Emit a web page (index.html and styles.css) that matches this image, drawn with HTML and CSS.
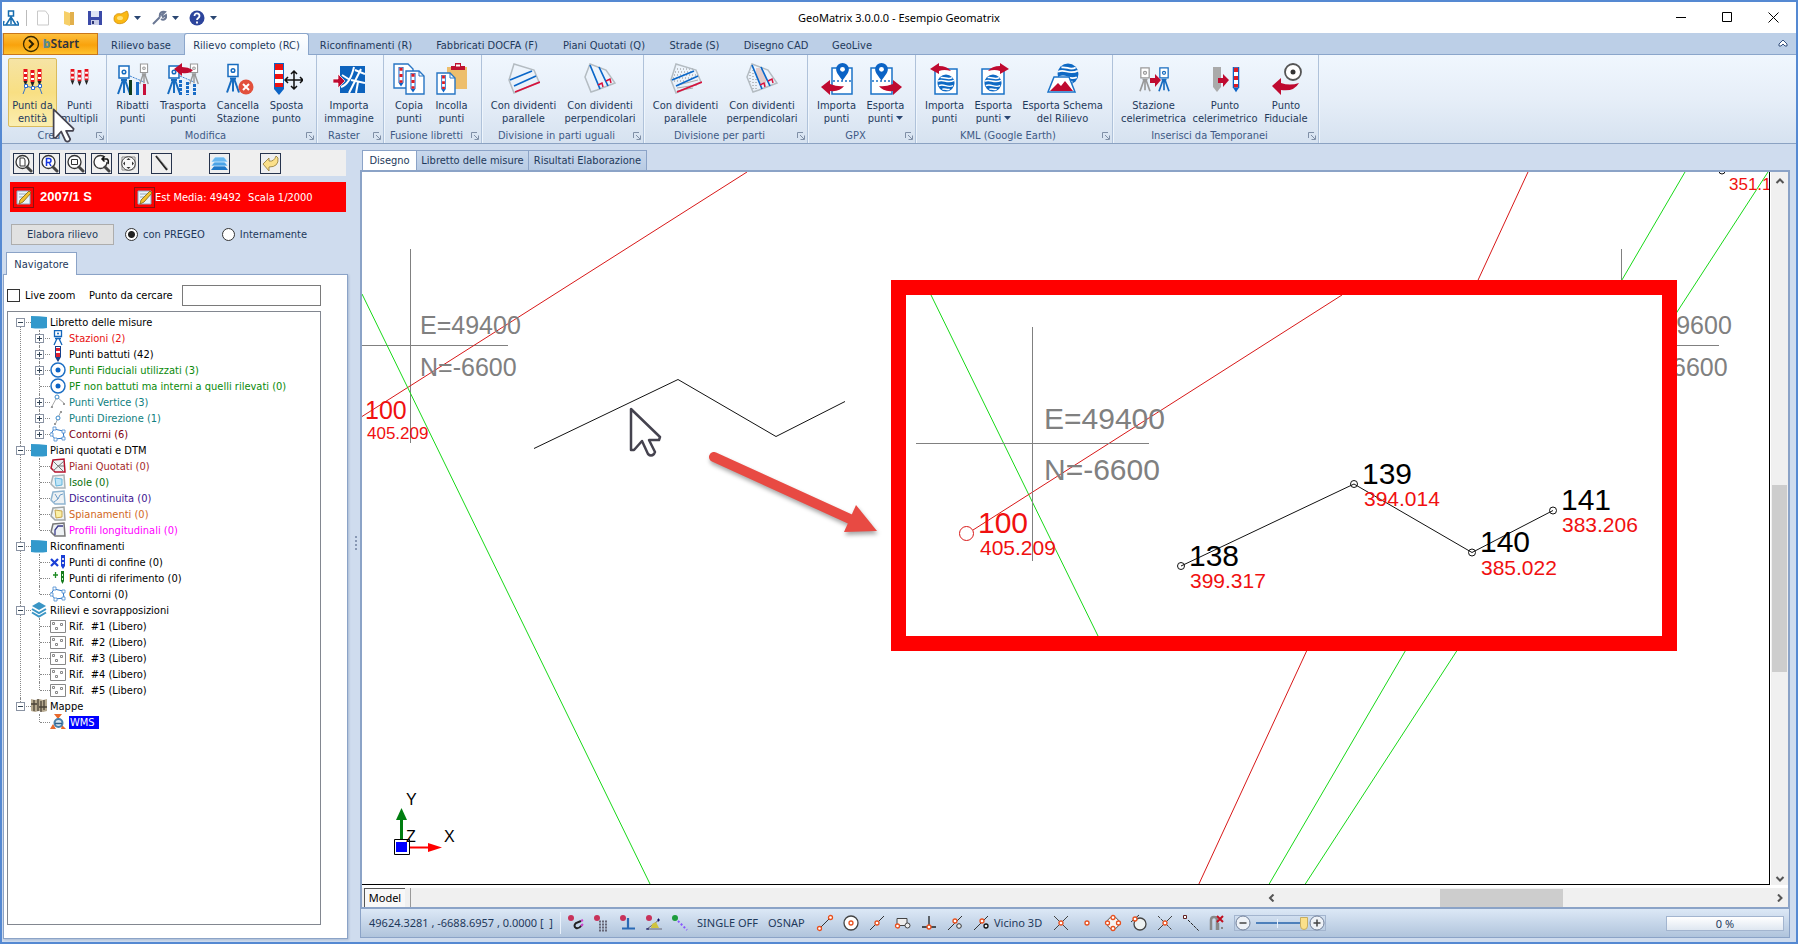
FILE: index.html
```html
<!DOCTYPE html>
<html lang="it">
<head>
<meta charset="utf-8">
<title>GeoMatrix 3.0.0.0 - Esempio Geomatrix</title>
<link rel="stylesheet" href="styles.css">
</head>
<body>
<svg class="defs" aria-hidden="true">
  <symbol id="pole" viewBox="0 0 8 32"><path d="M0 0h8v25l-4 6-4-6z" fill="#0b63c5"/><path d="M1.500 1h5v24h-5z" fill="#fff"/><path d="M1.500 1h5v5h-5zM1.500 11h5v5h-5zM1.500 21h5v4h-5z" fill="#e01b24"/></symbol>
  <symbol id="station" viewBox="0 0 14 30"><path d="M2 1h10v12H2z" fill="#fff" stroke="currentColor" stroke-width="1.500"/><circle cx="7" cy="7" r="1.800" fill="none" stroke="currentColor" stroke-width="1.500"/><path d="M4 15h6M6 15L1 29M8 15l5 14M7 15v13" fill="none" stroke="currentColor" stroke-width="2"/></symbol>
  <symbol id="minipole" viewBox="0 0 5 18"><path d="M.5 0h4v12h-4z" fill="#e8101c"/><path d="M1 3h3v2H1zM1 8h3v2H1z" fill="#fff"/><path d="M.5 12h4l-2 5z" fill="#222"/></symbol>
  <symbol id="divpar" viewBox="0 0 32 32"><path d="M6 1l20 6 5 12-25 11L1 17z" fill="none" stroke="#b4bcc2" stroke-width="1.500"/><path d="M2 17L24 8M6 23l22-10" stroke="#0a67c9" stroke-width="1.700"/><path d="M7 29l25-10" stroke="#d8123c" stroke-width="1.700"/></symbol>
  <symbol id="divperp" viewBox="0 0 32 32"><path d="M6 1l16 6 9 13-18 7-6 2L1 14z" fill="none" stroke="#b4bcc2" stroke-width="1.500"/><path d="M6 2l10 24M15 4l9 19" stroke="#0a67c9" stroke-width="1.700"/><path d="M14 22l4-2 1 4M22 18l4-2 1 4" fill="none" stroke="#d8123c" stroke-width="1.500"/></symbol>
  <symbol id="globe" viewBox="0 0 20 20"><circle cx="10" cy="10" r="9.500" fill="#0e69c4"/><path d="M1 8c6-3 10 3 18-1M2 13c6-3 9 3 16 0M4 4c5-1 8 3 13 0M6 17c3-1 5 1 8 0" fill="none" stroke="#fff" stroke-width="1.600"/></symbol>
  <symbol id="pin" viewBox="0 0 12 17"><path d="M6 0a6 6 0 0 1 6 6c0 4-4 7-6 11C4 13 0 10 0 6a6 6 0 0 1 6-6z" fill="#0b63c5"/><circle cx="6" cy="6" r="2.300" fill="#fff"/></symbol>
  <symbol id="launch" viewBox="0 0 8 8"><path d="M.5 6V.5H6M3 3l4 4M7.500 3.500v4h-4" fill="none" stroke="#7f8fa6"/></symbol>
  <symbol id="caret" viewBox="0 0 7 4"><path d="M0 0h7L3.500 4z" fill="#2a4672"/></symbol>
  <symbol id="folder" viewBox="0 0 16 16"><path d="M0 2q8 0 16 1v11q-8 1-16 0z" fill="#3399cc"/></symbol>
  <symbol id="target" viewBox="0 0 16 16"><circle cx="8" cy="8" r="7" fill="#fff" stroke="#1d6fc4" stroke-width="1.500"/><circle cx="8" cy="8" r="2.500" fill="#0b63c5"/></symbol>
  <symbol id="polygon" viewBox="0 0 16 16"><path d="M4 3l9 2 1 7-9 1-4-5z" fill="none" stroke="#2c76c8"/><path d="M3 1h3v3H3zM12 4h3v3h-3zM12 11h3v3h-3zM4 12h3v3H4zM0 7h3v3H0z" fill="#fff" stroke="#4a8bd0" stroke-width=".8"/></symbol>
  <symbol id="slot" viewBox="0 0 16 16"><path d="M.5 2.500h15v12H.5z" fill="#fff" stroke="#888"/><path d="M2.500 4.500h2v2h-2zM10.500 5.500h2v2h-2zM5.500 9.500h2v2h-2z" fill="none" stroke="#888"/></symbol>
  <symbol id="mesh" viewBox="0 0 16 16"><path d="M3 2l11-1 1 13H5L1 10z" fill="#eef2f4" stroke="currentColor" stroke-width="1.500"/></symbol>
  <symbol id="lens" viewBox="0 0 19 19"><circle cx="8.500" cy="8" r="6.500" fill="#fdfdfd" stroke="#333" stroke-width="1.300"/><path d="M13 13l4 4" stroke="#444" stroke-width="3" stroke-linecap="round"/></symbol>
  <symbol id="edit" viewBox="0 0 19 19"><path d="M3 3h13v13H3z" fill="#eaf3fa" stroke="#87a9c2"/><path d="M5 6h8M5 9h5" stroke="#9ab"/><path d="M15 3l2 2-8 9-4 2 1-4z" fill="#f2c230" stroke="#7b6214" stroke-width=".8"/></symbol>
  <symbol id="cursor" viewBox="-2 -2 34 52"><path d="M0 0v41h3l8-9 6 13q3 3 6 0l1-2-6-12h10l1-3z" fill="#fff" stroke="#45434f" stroke-width="2.500" stroke-linejoin="round"/></symbol>
</svg>

<div class="window">
  <header class="titlebar">
    <div class="quick">
      <svg class="q16" viewBox="0 0 16 16"><path d="M5.500 1h5v5h-5z" fill="#fff" stroke="#176cae" stroke-width="1.500"/><path d="M8 6v8M8 7l-5 8M8 7l5 8M1 11L0 15h16l-2-4" fill="none" stroke="#176cae" stroke-width="1.500"/></svg>
      <span class="q-sep"></span>
      <button class="q" aria-label="Nuovo"><svg viewBox="0 0 16 16"><path d="M2.500 1h8l3 4v10h-11z" fill="#fff" stroke="#c9c9c9"/></svg></button>
      <button class="q" aria-label="Apri"><svg viewBox="0 0 16 16"><path d="M3 1l6 2v13l-6-2z" fill="#f6cf68"/><path d="M9 2h4v13H9z" fill="#e2b04c"/></svg></button>
      <button class="q" aria-label="Salva"><svg viewBox="0 0 16 16"><path d="M1 1h14v14H1z" fill="#3b4aa8"/><path d="M4 1h8v6H4z" fill="#dfe4f5"/><path d="M4 10h8v5H4z" fill="#c6cbe6"/><path d="M5 11h2v3H5z" fill="#2b3475"/></svg></button>
      <button class="q q-drop" aria-label="Vista"><svg viewBox="0 0 16 16"><path d="M1 9c0-5 4-6 7-5l6-3c2 3 2 8-2 11s-11 2-11-3z" fill="#fbb914" stroke="#d18b05" stroke-width=".8"/><ellipse cx="7" cy="8" rx="3" ry="2" fill="#ffe27a"/></svg><svg class="caret"><use href="#caret"/></svg></button>
      <button class="q q-drop" aria-label="Strumenti"><svg viewBox="0 0 16 16"><path d="M2 14l7-7M9 7c-1-4 2-6 5-5l-3 3 1 2 3-2c1 3-2 6-5 4" fill="none" stroke="#6b7894" stroke-width="2"/></svg><svg class="caret"><use href="#caret"/></svg></button>
      <button class="q q-drop" aria-label="Aiuto"><svg viewBox="0 0 16 16"><circle cx="8" cy="8" r="7.500" fill="#2c449c"/><path d="M5.500 6c0-4 5-3 5 0 0 2-2.500 2-2.500 4M8 11.500v2" fill="none" stroke="#fff" stroke-width="1.800"/></svg><svg class="caret"><use href="#caret"/></svg></button>
    </div>
    <h1 class="title">GeoMatrix 3.0.0.0 - Esempio Geomatrix</h1>
    <div class="controls">
      <button aria-label="Riduci"><svg viewBox="0 0 11 11"><path d="M0 5.500h10"/></svg></button>
      <button aria-label="Ingrandisci"><svg viewBox="0 0 11 11"><path d="M.5.5h9v9h-9z"/></svg></button>
      <button aria-label="Chiudi"><svg viewBox="0 0 11 11"><path d="M.5.5l10 10M10.500.5l-10 10"/></svg></button>
    </div>
  </header>

  <nav class="tabs">
    <button class="start"><svg viewBox="0 0 18 18"><circle cx="9" cy="9" r="7.500" fill="none" stroke="#3b2b00" stroke-width="1.300"/><path d="M7 5l4 4-4 4" fill="none" stroke="#2b2000" stroke-width="2"/></svg><span><b>b</b>Start</span></button>
    <button class="w86">Rilievo base</button>
    <button class="w125 active">Rilievo completo (RC)</button>
    <button class="w114">Riconfinamenti (R)</button>
    <button class="w128">Fabbricati DOCFA (F)</button>
    <button class="w106">Piani Quotati (Q)</button>
    <button class="w75">Strade (S)</button>
    <button class="w88">Disegno CAD</button>
    <button class="w64">GeoLive</button>
    <button class="collapse" aria-label="Comprimi"><svg viewBox="0 0 10 8"><path d="M1 5l4-4 4 4v2H7L5 5 3 7H1z" fill="#fff" stroke="#35507d"/></svg></button>
  </nav>

  <div class="ribbon">
    <section class="group g103">
      <div class="tools">
        <button class="tool w49 hot"><svg viewBox="0 0 32 32"><use href="#minipole" x="6" y="6" width="5" height="18"/><use href="#minipole" x="13" y="7" width="5" height="18"/><use href="#minipole" x="20" y="6" width="5" height="18"/><path d="M6 31l3-8 7 2 6-2 3 8" fill="none" stroke="#3772c8"/><path d="M7.500 21.500h3v3h-3zM14.500 23.500h3v3h-3zM21.500 21.500h3v3h-3z" fill="#fff" stroke="#2c6bd0"/></svg>Punti da<br>entità</button>
        <button class="tool w45"><svg viewBox="0 0 32 32"><use href="#minipole" x="6" y="6" width="5" height="17"/><use href="#minipole" x="13" y="7" width="5" height="17"/><use href="#minipole" x="20" y="6" width="5" height="17"/></svg>Punti<br>multipli</button>
      </div>
      <footer>Crea<svg><use href="#launch"/></svg></footer>
      <svg class="pointer" aria-hidden="true"><use href="#cursor"/></svg>
    </section>
    <section class="group g210">
      <div class="tools">
        <button class="tool w43"><svg viewBox="0 0 32 32"><path d="M13 13l14 6" stroke="#3a80d0" stroke-dasharray="2 1"/><use href="#station" x="22" y="0" width="10" height="22" color="#999"/><use href="#station" x="0" y="2" width="14" height="30" color="#176cc0"/><path d="M12 17h3v15h-3z" fill="#123d1c"/><path d="M19 19h3v13h-3z" fill="#1a6cc6"/><path d="M26 21h3v11h-3z" fill="#c8103a"/></svg>Ribatti<br>punti</button>
        <button class="tool w58"><svg viewBox="0 0 32 32"><path d="M13 13l14 6" stroke="#3a80d0" stroke-dasharray="2 1"/><use href="#station" x="22" y="0" width="10" height="22" color="#999"/><use href="#station" x="0" y="2" width="14" height="30" color="#176cc0"/><path d="M13.500 17v15M20.500 19v13M27.500 21v11" stroke="#1a6cc6" stroke-width="3" stroke-dasharray="3 1"/><path d="M7 6l8-6v4q6 0 11 3-3 4-11 3v3z" fill="#bf0a30"/></svg>Trasporta<br>punti</button>
        <button class="tool w52"><svg viewBox="0 0 32 32"><use href="#station" x="4" y="0" width="14" height="31" color="#176cc0"/><circle cx="24" cy="24" r="7.500" fill="#e2503c"/><path d="M21 21l6 6M27 21l-6 6" stroke="#fff" stroke-width="2"/></svg>Cancella<br>Stazione</button>
        <button class="tool w45"><svg viewBox="0 0 32 32"><path d="M3 0h10v26l-5 6-5-6z" fill="#0b63c5"/><path d="M4 1h8v22H4z" fill="#fff"/><path d="M4 1h8v6H4zM4 11h8v5H4zM4 20h8v4H4z" fill="#ee1111"/><path d="M23 9v16M15 17h16M20 11l3-3 3 3M20 23l3 3 3-3M17 14l-3 3 3 3M29 14l3 3-3 3" fill="none" stroke="#111" stroke-width="1.500"/></svg>Sposta<br>punto</button>
      </div>
      <footer>Modifica<svg><use href="#launch"/></svg></footer>
    </section>
    <section class="group g67">
      <div class="tools">
        <button class="tool w56"><svg viewBox="0 0 32 32"><path d="M7 3h25v27H7z" fill="#0d63bd"/><path d="M8 24q9-3 13-20M18 17l14 3M22 7l10 4M16 30q4-8 12-24M9 12l8 5M25 19l-2 11" fill="none" stroke="#fff" stroke-width="2"/><path d="M0 16h5v-5l7 7-7 7v-5H0z" fill="#bf0a30" stroke="#fff" stroke-width=".7"/></svg>Importa<br>immagine</button>
      </div>
      <footer>Raster<svg><use href="#launch"/></svg></footer>
    </section>
    <section class="group g98">
      <div class="tools">
        <button class="tool w42"><svg viewBox="0 0 32 32"><path d="M1 1h14l5 5v19H1z" fill="#fff" stroke="#2775c4" stroke-width="1.400"/><use href="#pole" x="5" y="4" width="6" height="20"/><path d="M13 8h13l5 5v18H13z" fill="#fff" stroke="#2775c4" stroke-width="1.400"/><path d="M26 8v5h5" fill="none" stroke="#2775c4"/><use href="#pole" x="17" y="10" width="6" height="20"/></svg>Copia<br>punti</button>
        <button class="tool w43"><svg viewBox="0 0 32 32"><path d="M11 4h20v22H11z" fill="#edbe6c"/><path d="M15 3h4V0h6v3h4v4H15z" fill="#bf1230"/><path d="M20 1.500h4v2h-4z" fill="#fff"/><path d="M1 10h13l5 5v16H1z" fill="#fff" stroke="#2775c4" stroke-width="1.400"/><path d="M14 10v5h5" fill="none" stroke="#2775c4"/><use href="#pole" x="5" y="12" width="5" height="18"/></svg>Incolla<br>punti</button>
      </div>
      <footer>Fusione libretti<svg><use href="#launch"/></svg></footer>
    </section>
    <section class="group g162">
      <div class="tools">
        <button class="tool w75"><svg><use href="#divpar"/></svg>Con dividenti<br>parallele</button>
        <button class="tool w78"><svg><use href="#divperp"/></svg>Con dividenti<br>perpendicolari</button>
      </div>
      <footer>Divisione in parti uguali<svg><use href="#launch"/></svg></footer>
    </section>
    <section class="group g164">
      <div class="tools">
        <button class="tool w75"><svg viewBox="0 0 32 32"><path d="M7 6h16M5 9h18M4 12h24M3 15h20M4 18h12" stroke="#888" stroke-dasharray="1 2"/><path d="M7 25l20-3M7 28l16-3M8 22l20-5" stroke="#aaa"/><use href="#divpar"/></svg>Con dividenti<br>parallele</button>
        <button class="tool w78"><svg viewBox="0 0 32 32"><path d="M4 9v12M7 7v19M10 16v10" stroke="#888" stroke-dasharray="1 2"/><path d="M11 5v10M13 5v14M15 6v14M17 9v12M19 13v10" stroke="#d9a69c"/><use href="#divperp"/></svg>Con dividenti<br>perpendicolari</button>
      </div>
      <footer>Divisione per parti<svg><use href="#launch"/></svg></footer>
    </section>
    <section class="group g108">
      <div class="tools">
        <button class="tool w49"><svg viewBox="0 0 32 32"><path d="M16 5h-5v26h20V5h-5" fill="#fff" stroke="#1b73c8" stroke-width="1.500"/><path d="M12 18h19" stroke="#1b73c8" stroke-width="1.500" stroke-dasharray="2 2"/><use href="#pin" x="15" y="0" width="13" height="18"/><path d="M0 24l9-7v4q8 3 14 2-4 6-14 5v4z" fill="#bf0a30"/></svg>Importa<br>punti</button>
        <button class="tool w49"><svg viewBox="0 0 32 32"><path d="M6 5H1v26h21V5h-5" fill="#fff" stroke="#1b73c8" stroke-width="1.500"/><path d="M2 18h19" stroke="#1b73c8" stroke-width="1.500" stroke-dasharray="2 2"/><use href="#pin" x="5" y="0" width="13" height="18"/><path d="M32 24l-9-7v4q-8 3-14 2 4 6 14 5v4z" fill="#bf0a30"/></svg>Esporta<br>punti <svg class="caret"><use href="#caret"/></svg></button>
      </div>
      <footer>GPX<svg><use href="#launch"/></svg></footer>
    </section>
    <section class="group g197">
      <div class="tools">
        <button class="tool w49"><svg viewBox="0 0 32 32"><path d="M6 6v25h22V6z" fill="#fff" stroke="#1b73c8" stroke-width="1.500"/><use href="#globe" x="8" y="11" width="18" height="18"/><path d="M1 6l9-6v3q8 0 12 5-7-2-12 0v3z" fill="#bf0a30"/></svg>Importa<br>punti</button>
        <button class="tool w49"><svg viewBox="0 0 32 32"><path d="M4 6v25h22V6z" fill="#fff" stroke="#1b73c8" stroke-width="1.500"/><use href="#globe" x="6" y="11" width="18" height="18"/><path d="M31 6l-9-6v3q-8 0-12 5 7-2 12 0v3z" fill="#bf0a30"/></svg>Esporta<br>punti <svg class="caret"><use href="#caret"/></svg></button>
        <button class="tool w89"><svg viewBox="0 0 32 32"><use href="#globe" x="10" y="0" width="22" height="22"/><path d="M7 14h15l6 15H1z" fill="#fff" stroke="#1b73c8" stroke-width="1.500"/><path d="M3 28l8-8 3 3 4-5 8 10z" fill="#bf0a30"/></svg>Esporta Schema<br>del Rilievo</button>
      </div>
      <footer>KML (Google Earth)<svg><use href="#launch"/></svg></footer>
    </section>
    <section class="group g206">
      <div class="tools">
        <button class="tool w73"><svg viewBox="0 0 32 32"><use href="#station" x="1" y="4" width="12" height="25" color="#999"/><use href="#station" x="20" y="4" width="12" height="25" color="#176cc0"/><path d="M12 15h5v-4l6 6-6 7v-4h-5z" fill="#bf0a30"/></svg>Stazione<br>celerimetrica</button>
        <button class="tool w70"><svg viewBox="0 0 32 32"><path d="M4 4h8v20l-4 5-4-5z" fill="#aaa"/><use href="#pole" x="23" y="4" width="8" height="26"/><path d="M9 15h5v-4l6 6-6 7v-4H9z" fill="#bf0a30"/></svg>Punto<br>celerimetrico</button>
        <button class="tool w52"><svg viewBox="0 0 32 32"><circle cx="23" cy="9" r="8" fill="#fff" stroke="#555" stroke-width="1.800"/><circle cx="23" cy="9" r="2.500" fill="#333"/><path d="M2 23l9-8v5q9 3 18 0-5 9-18 7v5z" fill="#bf0a30"/></svg>Punto<br>Fiduciale</button>
      </div>
      <footer>Inserisci da Temporanei<svg><use href="#launch"/></svg></footer>
    </section>
  </div>

  <main class="workspace">
    <aside class="side">
      <div class="viewbar">
        <button aria-label="Zoom foglio"><svg viewBox="0 0 19 19"><use href="#lens"/><path d="M6 4h4l1 2v6H6z" fill="#fff" stroke="#333"/></svg></button>
        <button aria-label="Zoom rilievo"><svg viewBox="0 0 19 19"><use href="#lens"/><path d="M6.500 12V4.500H9q2 0 2 2t-2 2H6.500M9 8.500l2 3.500" fill="none" stroke="#1636e0" stroke-width="1.500"/></svg></button>
        <button aria-label="Zoom finestra"><svg viewBox="0 0 19 19"><use href="#lens"/><path d="M5.500 5.500h6v5h-6z" fill="none" stroke="#333"/></svg></button>
        <button aria-label="Zoom precedente"><svg viewBox="0 0 19 19"><use href="#lens"/><path d="M10 3h7v5h-7z" fill="#f0f0f0"/><path d="M10 5h5q2 1 1 5M12.500 2.500L10 5l2.500 2.500" fill="none" stroke="#111" stroke-width="1.500"/></svg></button>
        <button class="gap-s" aria-label="Sposta vista"><svg viewBox="0 0 19 19"><path d="M3 3h13v10q-1 3-4 3H3z" fill="#fafafa" stroke="#888"/><circle cx="9.500" cy="9.500" r="6.800" fill="#f8f8f8" stroke="#444"/><path d="M9.500 4l2 2h-4zM9.500 15l2-2h-4zM4 9.500l2-2v4zM15 9.500l-2-2v4z" fill="#333"/></svg></button>
        <button class="gap-m" aria-label="Penna"><svg viewBox="0 0 19 19"><path d="M4 2l11 14" stroke="#222" stroke-width="2"/><path d="M5 2l11 13" stroke="#999" stroke-width=".8"/></svg></button>
        <button class="gap-l" aria-label="Livelli"><svg viewBox="0 0 19 19"><path d="M5 11h9l4 5H1z" fill="#1e78c8"/><path d="M5 7h9l4 5H1z" fill="#4ba3e6" stroke="#e8f5ff" stroke-width=".7"/><path d="M5 3h9l4 5H1z" fill="#68b7f0" stroke="#e8f5ff" stroke-width=".7"/></svg></button>
        <button class="gap-x" aria-label="Annulla"><svg viewBox="0 0 19 19"><path d="M2 10l6-6v3q5 1 7-5l2 2q1 9-9 9v4z" fill="#fbe08a" stroke="#8f7733" stroke-width=".8"/></svg></button>
      </div>
      <div class="survey">
        <button aria-label="Modifica rilievo"><svg><use href="#edit"/></svg></button>
        <strong>2007/1 S</strong>
        <button class="second" aria-label="Modifica est media"><svg><use href="#edit"/></svg></button>
        <span>Est Media: 49492</span>
        <span class="scale">Scala 1/2000</span>
      </div>
      <div class="process">
        <button class="run">Elabora rilievo</button>
        <label class="r1"><input type="radio" name="mode" checked>con PREGEO</label>
        <label class="r2"><input type="radio" name="mode">Internamente</label>
      </div>
      <div class="nav-tab"><button>Navigatore</button></div>
      <div class="navigator">
        <div class="search">
          <label class="live"><input type="checkbox">Live zoom</label>
          <label for="punto">Punto da cercare</label>
          <input type="text" id="punto">
        </div>
        <ul class="tree">
          <li><div class="row"><button class="tg minus" aria-label="Comprimi"></button><svg><use href="#folder"/></svg>Libretto delle misure</div>
            <ul>
              <li><div class="row red"><button class="tg" aria-label="Espandi"></button><svg viewBox="0 0 16 16"><path d="M4.500.5h7v6h-7z" fill="#fff" stroke="#1366bb" stroke-width="1.300"/><circle cx="8" cy="3.500" r="1" fill="#1366bb"/><path d="M5 8.500h6M7 8.500L4 15M9 8.500l3 6.500" stroke="#1366bb" stroke-width="1.300"/></svg>Stazioni (2)</div></li>
              <li><div class="row"><button class="tg" aria-label="Espandi"></button><svg viewBox="0 0 16 16"><path d="M5 0h6v11l-3 5-3-5z" fill="#17408b"/><path d="M6 1h4v10H6z" fill="#fff"/><path d="M6 2h4v3H6zM6 7h4v4H6z" fill="#e02030"/></svg>Punti battuti (42)</div></li>
              <li><div class="row green"><button class="tg" aria-label="Espandi"></button><svg><use href="#target"/></svg>Punti Fiduciali utilizzati (3)</div></li>
              <li><div class="row green"><i></i><svg><use href="#target"/></svg>PF non battuti ma interni a quelli rilevati (0)</div></li>
              <li><div class="row teal"><button class="tg" aria-label="Espandi"></button><svg viewBox="0 0 16 16"><path d="M1 14L7 3l8 7" fill="none" stroke="#aaa"/><circle cx="7" cy="3" r="2" fill="#fff" stroke="#3a88c8"/><path d="M1 12h2v2H1zM13 9h2v2h-2z" fill="#999"/></svg>Punti Vertice (3)</div></li>
              <li><div class="row teal"><button class="tg" aria-label="Espandi"></button><svg viewBox="0 0 16 16"><path d="M5 15l6-14" stroke="#aaa"/><circle cx="8" cy="8" r="2" fill="#fff" stroke="#3a88c8"/><path d="M10 1h2v2h-2zM4 13h2v2H4z" fill="#999"/></svg>Punti Direzione (1)</div></li>
              <li><div class="row maroon"><button class="tg" aria-label="Espandi"></button><svg><use href="#polygon"/></svg>Contorni (6)</div></li>
            </ul></li>
          <li><div class="row"><button class="tg minus" aria-label="Comprimi"></button><svg><use href="#folder"/></svg>Piani quotati e DTM</div>
            <ul>
              <li><div class="row brown"><i></i><svg viewBox="0 0 16 16"><use href="#mesh" color="#b5132c"/><path d="M3 13L14 3M3 3l10 10M8 8h6" stroke="#777"/></svg>Piani Quotati (0)</div></li>
              <li><div class="row dgreen"><i></i><svg viewBox="0 0 16 16"><use href="#mesh" color="#aab4b8"/><path d="M5 4l7 1v6l-6 1z" fill="#bfe5f7" stroke="#63b5dc"/></svg>Isole (0)</div></li>
              <li><div class="row indigo"><i></i><svg viewBox="0 0 16 16"><use href="#mesh" color="#8fb4d0"/><path d="M4 12l4-3 2-4 3-1M5 4l3 5" fill="none" stroke="#6d9cc8"/></svg>Discontinuita (0)</div></li>
              <li><div class="row orange"><i></i><svg viewBox="0 0 16 16"><use href="#mesh" color="#a0a5a5"/><path d="M5 4l7 1v6l-6 1z" fill="#fbf0a5" stroke="#c9a74c"/></svg>Spianamenti (0)</div></li>
              <li><div class="row magenta"><i></i><svg viewBox="0 0 16 16"><use href="#mesh" color="#777"/><path d="M5 13V8l3-4h5" fill="none" stroke="#3c3c8c" stroke-width="1.300"/></svg>Profili longitudinali (0)</div></li>
            </ul></li>
          <li><div class="row"><button class="tg minus" aria-label="Comprimi"></button><svg><use href="#folder"/></svg>Riconfinamenti</div>
            <ul>
              <li><div class="row"><i></i><svg viewBox="0 0 16 16"><path d="M1 5l7 7M8 5l-7 7" stroke="#1a3fd6" stroke-width="2.200"/><path d="M11 1h4v11l-2 3-2-3z" fill="#1a3fd6"/><path d="M12 4h2v2h-2zM12 8h2v2h-2z" fill="#dde"/></svg>Punti di confine (0)</div></li>
              <li><div class="row"><i></i><svg viewBox="0 0 16 16"><path d="M3 5h5M5.500 2v6" stroke="#1c8a22" stroke-width="1.300"/><path d="M11 1h3v10l-1.500 3L11 11z" fill="#147a1b"/><path d="M12 4h1v2h-1zM12 8h1v2h-1z" fill="#cfc"/></svg>Punti di riferimento (0)</div></li>
              <li><div class="row"><i></i><svg><use href="#polygon"/></svg>Contorni (0)</div></li>
            </ul></li>
          <li><div class="row"><button class="tg minus" aria-label="Comprimi"></button><svg viewBox="0 0 16 16"><path d="M8 0l7 4-7 4-7-4z" fill="#3a95c5"/><path d="M1 7l7 4 7-4M1 10.500l7 4 7-4" fill="none" stroke="#3a95c5" stroke-width="2"/></svg>Rilievi e sovrapposizioni</div>
            <ul>
              <li><div class="row"><i></i><svg><use href="#slot"/></svg>Rif.&nbsp; #1 (Libero)</div></li>
              <li><div class="row"><i></i><svg><use href="#slot"/></svg>Rif.&nbsp; #2 (Libero)</div></li>
              <li><div class="row"><i></i><svg><use href="#slot"/></svg>Rif.&nbsp; #3 (Libero)</div></li>
              <li><div class="row"><i></i><svg><use href="#slot"/></svg>Rif.&nbsp; #4 (Libero)</div></li>
              <li><div class="row"><i></i><svg><use href="#slot"/></svg>Rif.&nbsp; #5 (Libero)</div></li>
            </ul></li>
          <li><div class="row"><button class="tg minus" aria-label="Comprimi"></button><svg viewBox="0 0 16 16"><path d="M0 1l4 1 4-1 4 1 4-1v12l-4 1-4-1-4 1-4-1z" fill="#b7aa90"/><path d="M3 2v11M7 1v12M10 3v11M13 2v10M0 6h6M8 9h8" stroke="#4a4237" stroke-width="1.300"/></svg>Mappe</div>
            <ul>
              <li><div class="row"><i></i><svg viewBox="0 0 16 16"><path d="M4 0h8L8 5zM0 15l3-5 3 5zM11 15l1-4 4 4z" fill="#e8692c"/><circle cx="8.500" cy="9" r="4" fill="#d7e8f2" stroke="#4a7fa8" stroke-width="2"/><path d="M5 9.500h7" stroke="#2e5f8a" stroke-width="1.500"/></svg><span class="sel">WMS</span></div></li>
            </ul></li>
        </ul>
      </div>
    </aside>

    <div class="splitter"><span></span><span></span><span></span><span></span></div>

    <section class="document">
      <div class="doc-tabs">
        <button class="active">Disegno</button><button class="w111">Libretto delle misure</button><button class="w117">Risultati Elaborazione</button>
      </div>
      <div class="frame">
        <div class="drawing">
          <svg class="cad" role="img" aria-label="Disegno del rilievo">
            <g transform="translate(-362 -172)">
              <g class="thin">
                <path class="grey" d="M410.500 249v194M362 345.500h146M1621.500 249v194M1573 345.500h146"/>
                <path class="rline" d="M362 416.500L747 172M1528 172l-330 714"/>
                <path class="gline" d="M362 294l289 592M1685 172l-417 714M1768 172l-464 714"/>
                <path class="kline" d="M534 448.500l144-69 98 57 69-35"/>
                <circle class="kline" cx="1722" cy="171" r="3"/>
              </g>
              <g class="t25 fgrey"><text x="420" y="334">E=49400</text><text x="420" y="376">N=-6600</text><text x="1631" y="334">E=49600</text><text x="1631" y="376">N=-6600</text></g>
              <text class="t25 fred" x="365" y="419">100</text>
              <text class="t17 fred" x="367" y="439">405.209</text>
              <text class="t17 fred" x="1729" y="190">351.1</text>

              <path d="M401.500 842v-24" stroke="#007d10" stroke-width="3"/><path d="M396 820l5.500-12 5.500 12z" fill="#007d10"/>
              <path d="M407 847.500h22" stroke="#f00" stroke-width="2"/><path d="M428 843v9l14-4.500z" fill="#f00"/>
              <path d="M394.500 839.500h15v15h-15z" fill="#fff" stroke="#000"/><path d="M396 842h11v10h-11z" fill="#00f"/>
              <g class="t16"><text x="406" y="805">Y</text><text x="406" y="842">Z</text><text x="444" y="842">X</text></g>

              <g class="arrow"><path d="M714 457l136 62" stroke="#e84a43" stroke-width="10" stroke-linecap="round"/><path d="M856 505l21 26-33 1z" fill="#e84a43"/></g>
              <use href="#cursor" x="629" y="407" width="34" height="52"/>

              <path d="M898.500 287.500h771v356h-771z" fill="#fff" stroke="#f00" stroke-width="15"/>
              <g class="thin">
                <path class="gline" d="M931 295l167 341"/>
                <path class="rline" d="M973 530l369-235"/><circle class="rline" cx="966.500" cy="533.500" r="7"/>
                <path class="grey" d="M1032.500 327v234M916 443.500h233"/>
                <path class="kline" d="M1181 566l173-82 118 68.500 81-42"/>
                <g class="kline"><circle cx="1181" cy="566" r="3.500"/><circle cx="1354" cy="484" r="3.500"/><circle cx="1472" cy="552.500" r="3.500"/><circle cx="1553" cy="510.500" r="3.500"/></g>
              </g>
              <g class="t30 fgrey"><text x="1044" y="429">E=49400</text><text x="1044" y="480">N=-6600</text></g>
              <text class="t30 fred" x="978" y="533">100</text>
              <g class="t30"><text x="1189" y="566">138</text><text x="1362" y="484">139</text><text x="1480" y="552">140</text><text x="1561" y="510">141</text></g>
              <g class="t21 fred"><text x="980" y="555">405.209</text><text x="1190" y="588">399.317</text><text x="1364" y="506">394.014</text><text x="1481" y="575">385.022</text><text x="1562" y="532">383.206</text></g>
            </g>
          </svg>
          <div class="vscroll"><svg viewBox="0 0 10 8"><path d="M1.500 6L5 2.500 8.500 6"/></svg><span class="v-before"></span><span class="v-thumb"></span><span class="v-after"></span><svg viewBox="0 0 10 8"><path d="M1.500 2L5 5.500 8.500 2"/></svg></div>
        </div>
        <div class="sheetbar">
          <button class="model">Model</button><span class="m-sep"></span>
          <div class="hscroll"><svg viewBox="0 0 10 8"><path d="M6.500.5L3 4l3.500 3.500"/></svg><span class="h-before"></span><span class="h-thumb"></span><span class="h-after"></span><svg viewBox="0 0 10 8"><path d="M3 .5L6.500 4 3 7.500"/></svg></div>
        </div>
      </div>
      <footer class="status">
        <output class="coords">49624.3281 , -6688.6957 , 0.0000 [&nbsp; ]</output>
        <button class="si" aria-label="Snap"><svg viewBox="0 0 18 18"><circle cx="4" cy="4" r="3" fill="#c8325a"/><path d="M14 7l-5 2q-3 3 0 5 3 1 6-3" fill="none" stroke="#222" stroke-width="2"/><path d="M14 7l2-1M14 12l2-2" stroke="#c4c" stroke-width="2"/></svg></button>
        <button class="si" aria-label="Griglia"><svg viewBox="0 0 18 18"><circle cx="4" cy="4" r="3" fill="#c8325a"/><path d="M6 7.500h9M6 10.500h9M6 13.500h9M6 16.500h9" stroke="#667" stroke-width="2" stroke-dasharray="2 1"/></svg></button>
        <button class="si" aria-label="Orto"><svg viewBox="0 0 18 18"><circle cx="4" cy="4" r="3" fill="#c8325a"/><path d="M9 4v10M3 14.500h13" stroke="#2a6ab5" stroke-width="2.200"/></svg></button>
        <button class="si" aria-label="Polare"><svg viewBox="0 0 18 18"><path d="M2 15h15M2 15L14 6" stroke="#667"/><path d="M7 10l4-2 3 6H6z" fill="#cfc340"/><circle cx="4" cy="4" r="3" fill="#c8325a"/><path d="M1 15h3M12 6h3M13.500 4.500v3" stroke="#116"/></svg></button>
        <button class="si" aria-label="Traccia"><svg viewBox="0 0 18 18"><circle cx="4" cy="4" r="3" fill="#1d9c3c"/><path d="M7 7l9 9" stroke="#85f" stroke-width="2" stroke-dasharray="2 2"/></svg></button>
        <button class="txt single">SINGLE OFF</button>
        <button class="txt osnap">OSNAP</button>
        <button class="si" aria-label="Estremo"><svg viewBox="0 0 18 18"><path d="M4 14L14 4" stroke="#333"/><g class="dot"><circle cx="3.500" cy="14.500" r="2"/><circle cx="14.500" cy="3.500" r="2"/></g></svg></button>
        <button class="si" aria-label="Centro"><svg viewBox="0 0 18 18"><circle cx="9" cy="9" r="7" fill="#fff" stroke="#444" stroke-width="1.300"/><g class="dot"><circle cx="9" cy="9" r="2"/></g></svg></button>
        <button class="si" aria-label="Medio"><svg viewBox="0 0 18 18"><path d="M2 16L16 2" stroke="#333"/><g class="dot"><circle cx="9" cy="9" r="2"/></g></svg></button>
        <button class="si" aria-label="Inserimento"><svg viewBox="0 0 18 18"><path d="M3 4.500h10v7H3z" fill="#eee" stroke="#444"/><circle cx="13.500" cy="11.500" r="2.500" fill="#eee" stroke="#444"/><g class="dot"><circle cx="3.500" cy="12" r="2"/></g></svg></button>
        <button class="si" aria-label="Perpendicolare"><svg viewBox="0 0 18 18"><path d="M9 2v10M2 13h14" stroke="#222" stroke-width="1.300"/><g class="dot"><circle cx="9" cy="13" r="2"/></g></svg></button>
        <button class="si" aria-label="Tangente"><svg viewBox="0 0 18 18"><path d="M2 16L16 2" stroke="#333"/><circle cx="13" cy="12" r="2.300" fill="#eee" stroke="#333"/><g class="dot"><circle cx="9" cy="7" r="2"/></g></svg></button>
        <button class="si" aria-label="Vicino"><svg viewBox="0 0 18 18"><path d="M2 16L16 2" stroke="#333"/><circle cx="14" cy="12" r="2" fill="#eee" stroke="#111" stroke-width="1.300"/><g class="dot"><circle cx="10" cy="7" r="2"/></g></svg></button>
        <button class="txt near">Vicino 3D</button>
        <button class="si" aria-label="Intersezione"><svg viewBox="0 0 18 18"><path d="M2 2l14 14M2 16L16 2" stroke="#444"/><g class="dot"><circle cx="9" cy="9" r="2"/></g></svg></button>
        <button class="si" aria-label="Nodo"><svg viewBox="0 0 18 18"><g class="dot"><circle cx="9" cy="9" r="2"/></g></svg></button>
        <button class="si" aria-label="Quadrante"><svg viewBox="0 0 18 18"><circle cx="9" cy="9" r="6" fill="#f4f4f4" stroke="#555"/><g class="dot"><circle cx="9" cy="3.500" r="2"/><circle cx="9" cy="14.500" r="2"/><circle cx="3.500" cy="9" r="2"/><circle cx="14.500" cy="9" r="2"/></g></svg></button>
        <button class="si" aria-label="Tangente cerchio"><svg viewBox="0 0 18 18"><circle cx="10" cy="10" r="6" fill="#eef2f2" stroke="#444" stroke-width="1.300"/><path d="M1 8l8-7" stroke="#333"/><g class="dot"><circle cx="5" cy="5" r="2"/></g></svg></button>
        <button class="si" aria-label="Intersezione apparente"><svg viewBox="0 0 18 18"><path d="M2 2l14 14" stroke="#444" stroke-dasharray="3 1"/><path d="M2 16L16 2" stroke="#444"/><g class="dot"><circle cx="9" cy="9" r="2"/></g></svg></button>
        <button class="si" aria-label="Estensione"><svg viewBox="0 0 18 18"><path d="M1.500 1.500h3v3h-3z" fill="#fff" stroke="#602020"/><path d="M6 6l11 11" stroke="#222" stroke-dasharray="3 1"/></svg></button>
        <button class="si" aria-label="Disattiva snap"><svg viewBox="0 0 18 18"><path d="M3 16V6q0-3 3-3t3 3v10M10 16V9" fill="none" stroke="#888" stroke-width="2.500"/><path d="M9 2l6 6M15 2L9 8" stroke="#c01020" stroke-width="2"/><path d="M13 13h2v2h-2z" fill="#888"/></svg></button>
        <div class="zoom">
          <button aria-label="Riduci zoom"><svg viewBox="0 0 16 16"><circle cx="8" cy="8" r="7" fill="#eef2f7" stroke="#71809a"/><path d="M4.500 8h7" stroke="#444" stroke-width="1.500"/></svg></button>
          <input type="range" min="0" max="100" value="100" aria-label="Zoom">
          <button aria-label="Aumenta zoom"><svg viewBox="0 0 16 16"><circle cx="8" cy="8" r="7" fill="#eef2f7" stroke="#71809a"/><path d="M4.500 8h7M8 4.500v7" stroke="#444" stroke-width="1.500"/></svg></button>
        </div>
        <div class="progress">0 %</div>
      </footer>
    </section>
  </main>
</div>
</body>
</html>
```
FILE: styles.css
```css
*{box-sizing:border-box}
body{margin:0;font:11px/13px "DejaVu Sans Condensed","DejaVu Sans",sans-serif;color:#1e395b}
button{font:inherit;color:inherit;background:none;border:0;padding:0;margin:0;flex:none}
svg{display:block;flex:none;overflow:hidden}
.defs{position:absolute;width:0;height:0}
.window{height:100vh;display:flex;flex-direction:column;border:2px solid #5589d2;background:#cfdcee;overflow:hidden}

.titlebar{display:grid;grid-template-columns:1fr auto 1fr;align-items:center;height:31px;background:#fff;flex:none}
.quick{display:flex;align-items:center;padding-left:1px}
.q16,.q svg{width:16px;height:16px}
.q-sep{width:1px;height:16px;background:#bbb;margin:0 8px 0 7px}
.q{display:flex;align-items:center;gap:5px;width:26px;height:24px}
.q-drop{width:38px}
.q svg.caret,.caret{width:7px;height:4px}
.title{margin:0;font:11px/16px "Noto Sans",sans-serif;color:#000}
.controls{display:flex;justify-content:flex-end}
.controls button{display:grid;place-items:center;width:46px;height:31px}
.controls svg{width:11px;height:11px;fill:none;stroke:#000}

.tabs{display:flex;height:22px;flex:none;background:#bccfe7;border-bottom:1px solid #8ba6cb;padding-left:1px}
.tabs>button{height:22px;padding-top:2px}
.tabs .start{display:flex;align-items:center;justify-content:center;gap:3px;width:95px;padding:0;font:600 12px/16px "Noto Sans",sans-serif;color:#2b3340;background:linear-gradient(#fdbf3c,#f9a20c 55%,#fdc22f);border:1px solid #c9761b}
.start svg{width:18px;height:18px}
.start b{color:#5d8a8c}
.tabs .active{background:linear-gradient(#fff,#eff6fd);border:1px solid #8ba6cb;border-bottom:0;border-radius:3px 3px 0 0;padding-top:1px}
.tabs .collapse{margin-left:auto;width:26px;padding:0 0 2px 8px}
.collapse svg{width:10px;height:8px}

.ribbon{display:flex;height:89px;flex:none;background:linear-gradient(#f0f7fe,#e6eef8 50%,#d6e2f0);border-bottom:1px solid #8ba2c2;padding-left:2px}
.group{position:relative;flex:none;display:flex;flex-direction:column;border-right:1px solid #afc2da;box-shadow:1px 0 #eef5fc}
.tools{display:flex;padding:3px 0 0 4px}
.tool{height:69px;padding-top:3px;white-space:nowrap;text-align:center;display:flow-root}
.tool>svg:first-child{width:32px;height:32px;margin:0 auto 4px}
.tool .caret{display:inline-block;vertical-align:2px}
.hot{border:1px solid #d9bb5d;border-radius:2px;padding-top:2px;background:linear-gradient(#f6e4a5,#f8df83 50%,#fbeeb0)}
.group footer{position:relative;flex:1;text-align:center;padding:2px 12px 0 0;color:#3e5a86;white-space:nowrap}
.group footer svg{position:absolute;right:2px;bottom:3px;width:8px;height:8px}
.pointer{position:absolute;left:48px;top:53px;width:24px;height:36px;z-index:2}
.g103{width:103px}.g210{width:210px}.g67{width:67px}.g98{width:98px}.g162{width:162px}.g164{width:164px}.g108{width:108px}.g197{width:197px}.g206{width:206px}
.w42{width:42px}.w43{width:43px}.w45{width:45px}.w49{width:49px}.w52{width:52px}.w56{width:56px}.w58{width:58px}.w64{width:64px}.w70{width:70px}.w73{width:73px}.w75{width:75px}.w78{width:78px}.w86{width:86px}.w88{width:88px}.w89{width:89px}.w106{width:106px}.w111{width:112px}.w114{width:114px}.w117{width:118px}.w125{width:125px}.w128{width:128px}

.workspace{flex:1;min-height:0;display:grid;grid-template-columns:346px 12px minmax(0,1fr);padding-right:6px}
.side{display:flex;flex-direction:column;min-height:0;padding:6px 0 3px 1px}
.viewbar{display:flex;align-items:center;height:26px;margin:0 2px 6px 7px;padding-left:3px;background:#efefef}
.viewbar button{width:21px;height:21px;border:1px solid #26334d;margin-right:5px}
.viewbar svg,.survey svg{width:19px;height:19px}
.viewbar .gap-s{margin-left:1px}
.viewbar .gap-m{margin-left:7px}
.viewbar .gap-l{margin-left:32px}
.viewbar .gap-x{margin-left:25px}
.survey{display:flex;align-items:center;height:30px;margin:0 2px 12px 7px;padding-left:3px;background:#f00;color:#fff;white-space:nowrap}
.survey button{width:21px;height:21px;border:1px solid #8c1010}
.survey strong{font:bold 13px/16px "Liberation Sans",sans-serif;width:100px;padding-left:6px}
.survey .scale{margin-left:7px}
.process{display:flex;align-items:center;height:21px;margin:0 0 7px 8px}
.run{width:103px;height:21px;background:#e1e1e1;border:1px solid #adadad}
.process label{display:flex;align-items:center;gap:5px}
.r1{margin-left:11px}
.r2{margin-left:17px}
input[type=radio]{appearance:none;width:13px;height:13px;margin:0;border:1px solid #333;border-radius:50%;background:#fff}
input[type=radio]:checked{background:radial-gradient(circle,#222 0 3px,#fff 4px)}
.nav-tab{display:flex;padding-left:3px;position:relative;z-index:1}
.nav-tab button{width:71px;height:23px;margin-bottom:-1px;background:#fff;border:1px solid #8ba3c7;border-bottom:0}
.navigator{flex:1;min-height:0;display:flex;flex-direction:column;background:#fff;border:1px solid #8ba3c7;padding:10px 26px 13px 3px;color:#000;box-shadow:1px 1px 2px #a9bbd4}
.search{display:flex;align-items:center;height:21px;margin-bottom:5px}
.live{display:flex;align-items:center;gap:5px;width:82px}
input[type=checkbox]{appearance:none;width:13px;height:13px;margin:0;border:1px solid #333;background:#fff}
input[type=text]{margin-left:auto;width:139px;height:21px;border:1px solid #7a7a7a;background:#fff;font:inherit}
.navigator .tree{flex:1;border:1px solid #828790;padding-top:2px;overflow:hidden}
.tree,.tree ul{list-style:none;margin:0;padding:0}
.tree ul{margin-left:19px}
.tree li{position:relative}
.tree li::before{content:"";position:absolute;left:12px;top:0;bottom:0;border-left:1px dotted #888}
.tree>li:first-child::before{top:8px}
.tree li:last-child::before{bottom:auto;height:8px}
.row{position:relative;display:flex;align-items:center;height:16px;padding-left:8px;white-space:nowrap}
.row::before{content:"";position:absolute;left:13px;width:10px;top:8px;border-top:1px dotted #888}
.row svg{width:16px;height:16px;margin:0 3px 0 6px;position:relative}
.row i{width:9px}
.tg{position:relative;width:9px;height:9px;border:1px solid #8a93a3;background:linear-gradient(#345,#345) center/5px 1px no-repeat,linear-gradient(#345,#345) center/1px 5px no-repeat,#fff}
.tg.minus{background:linear-gradient(#345,#345) center/5px 1px no-repeat,#fff}
.sel{background:#00f;color:#fff;padding:0 4px 0 1px}
.red{color:#e81010}.green{color:#0a8a0a}.dgreen{color:#0a700a}.teal{color:#108080}.maroon{color:#800010}.brown{color:#a52a2a}.indigo{color:#3c1490}.orange{color:#d2691e}.magenta{color:#f0f}

.splitter{display:flex;flex-direction:column;align-items:flex-end;justify-content:center;gap:2px;padding-right:3px}
.splitter span{width:2px;height:2px;background:#8898b4}

.document{display:flex;flex-direction:column;min-width:0;min-height:0;padding:6px 0 4px}
.doc-tabs{display:flex;padding-left:2px}
.doc-tabs button{height:20px;border:1px solid #8ba3c7;border-left:0;border-bottom:0;background:linear-gradient(#c9d8ec,#b8cbe4);white-space:nowrap}
.doc-tabs .active{width:55px;background:#fff;border-left:1px solid #8ba3c7}
.frame{flex:1;min-height:0;display:flex;flex-direction:column;border:2px solid #8ba3c7;background:#fff}
.drawing{flex:1;min-height:0;display:flex;padding-bottom:3px}
.cad{flex:1;min-width:0;height:100%;border-right:1px solid #000;border-bottom:1px solid #000;font-family:"Liberation Sans",sans-serif}
.thin{fill:none;stroke-width:1}
.grey{stroke:#808080}.rline{stroke:#d81818}.gline{stroke:#18d818}.kline{stroke:#111}
.fgrey{fill:#808080}.fred{fill:#f01010}
.t16{font-size:16px}.t17{font-size:17px}.t21{font-size:21px}.t25{font-size:25px}.t30{font-size:30px}
.arrow{filter:drop-shadow(1px 3px 2px rgba(0,0,0,.35))}
.vscroll{display:flex;flex-direction:column;align-items:center;width:17px;margin-left:1px;padding:5px 0 2px;background:#f0f0f0}
.vscroll svg,.hscroll svg{width:10px;height:8px;fill:none;stroke:#555;stroke-width:2}
.v-before{flex:298}.v-thumb{flex:185;width:15px;background:#cdcdcd}.v-after{flex:202}
.sheetbar{display:flex;height:19px;background:#f0f0f0}
.model{width:41px;margin-left:2px;border:1px solid #555;border-width:1px 0 0 1px;background:#f8f8f8;font:11px/16px "Noto Sans",sans-serif;color:#000}
.m-sep{width:1px;margin-left:5px;background:#999}
.hscroll{width:calc(37% - 7px);margin-left:auto;display:flex;align-items:center;padding-right:3px}
.h-before{flex:163}.h-thumb{flex:124;height:18px;background:#cdcdcd}.h-after{flex:213}
.status{display:flex;align-items:center;height:29px;border:1px solid #8ba3c7;border-top:0;background:linear-gradient(#dce8f6,#b0c4dc);font:11px/16px "Noto Sans",sans-serif;padding-right:5px}
.coords{width:200px;padding-left:8px;margin-right:2px;border-right:1px solid #e8f1fb;line-height:22px;white-space:nowrap}
.si{width:26px;height:22px;display:grid;place-items:center}
.si svg{width:18px;height:18px}
.dot circle{fill:#fff;stroke:#e8501e;stroke-width:1.300}
.txt{text-align:left;white-space:nowrap}
.single{width:71px;margin-left:4px}.osnap{width:44px}.near{width:54px}
.zoom{display:flex;align-items:center;height:16px;width:92px;margin-left:4px;border:1px solid #a3b5cf}
.zoom svg{width:16px;height:16px}
.zoom input{appearance:none;flex:1;min-width:0;height:14px;margin:0 1px 0 5px;background:linear-gradient(#e8f1fb,#e8f1fb) 21px 50%/1px 9px no-repeat,linear-gradient(90deg,#4d80bb,#4d80bb) center/100% 2px no-repeat}
.zoom input::-webkit-slider-thumb{appearance:none;width:8px;height:13px;background:#fbe08a;border:1px solid #c6ad61;border-radius:0 0 4px 4px}
.progress{width:118px;height:15px;margin-left:auto;text-align:center;line-height:13px;border:1px solid #a3b5cf;background:linear-gradient(#fff,#dfe7f1)}
```
